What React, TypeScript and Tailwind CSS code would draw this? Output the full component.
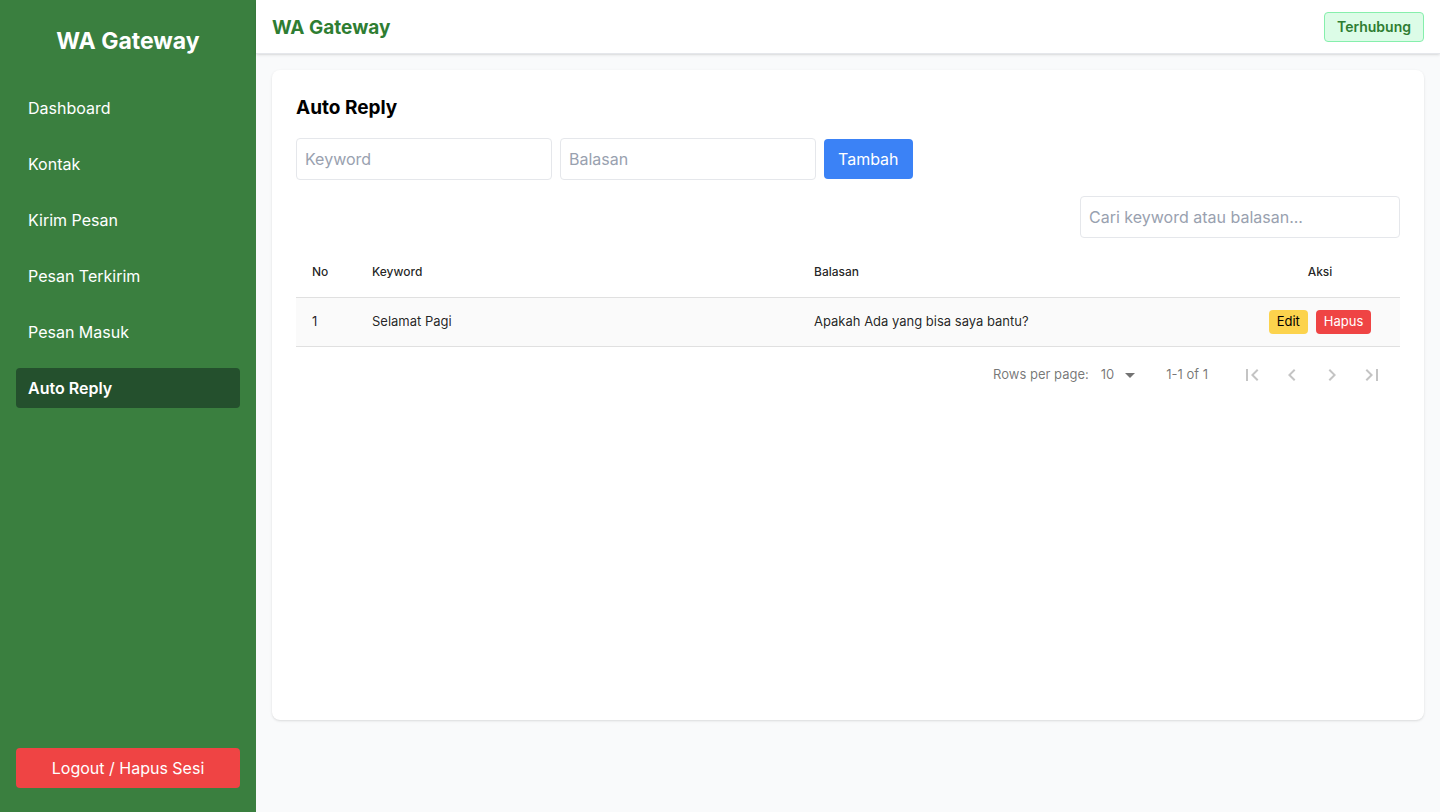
import { useState } from "react";

type Rule = { keyword: string; balasan: string };

const menu = ["Dashboard", "Kontak", "Kirim Pesan", "Pesan Terkirim", "Pesan Masuk", "Auto Reply"];

function PageIcon({ d }: { d: string }) {
  return (
    <button className="w-10 h-10 flex items-center justify-center text-[#c4c4c4]" disabled>
      <svg width="24" height="24" viewBox="0 0 24 24" fill="currentColor">
        <path d={d} />
      </svg>
    </button>
  );
}

export default function App() {
  const [keyword, setKeyword] = useState<string>("");
  const [balasan, setBalasan] = useState<string>("");
  const [search, setSearch] = useState<string>("");
  const [rules] = useState<Rule[]>([{ keyword: "Selamat Pagi", balasan: "Apakah Ada yang bisa saya bantu?" }]);

  const filtered = rules.filter(
    (r) =>
      r.keyword.toLowerCase().includes(search.toLowerCase()) ||
      r.balasan.toLowerCase().includes(search.toLowerCase())
  );

  return (
    <div className="flex h-[812px] font-['Inter',sans-serif] bg-gray-50">
      {/* Sidebar */}
      <aside className="w-64 shrink-0 bg-[#3a7f3f] text-white flex flex-col px-4">
        <h1 className="text-[23px] font-bold text-center mt-[25px] mb-[31px] leading-8">WA Gateway</h1>
        <nav className="flex flex-col gap-4">
          {menu.map((m) => (
            <a
              key={m}
              href="#"
              className={
                m === "Auto Reply"
                  ? "h-10 px-3 flex items-center rounded bg-[#24502d] font-semibold text-base"
                  : "h-10 px-3 flex items-center rounded text-base"
              }
            >
              {m}
            </a>
          ))}
        </nav>
        <div className="mt-auto mb-6">
          <button className="w-full h-10 bg-[#ef4444] rounded text-base">Logout / Hapus Sesi</button>
        </div>
      </aside>

      {/* Main */}
      <div className="flex-1 flex flex-col">
        <header className="h-[54px] bg-white border-b border-gray-200 shadow-sm flex items-center justify-between px-4">
          <span className="text-[19px] font-bold text-[#2e7d32] leading-7 mt-[3px]">WA Gateway</span>
          <span className="px-[12px] py-[4px] text-sm font-semibold text-[#2e7d32] bg-[#dcfce7] border border-[#86efac] rounded">
            Terhubung
          </span>
        </header>

        <main className="p-4">
          <div className="bg-white rounded-lg shadow h-[650px] p-6">
            <h2 className="text-[19px] font-bold text-black mb-[16px] leading-7">Auto Reply</h2>

            <div className="flex gap-2 items-center">
              <input
                value={keyword}
                onChange={(e) => setKeyword(e.target.value)}
                placeholder="Keyword"
                className="w-64 h-[42px] px-2 border border-gray-200 rounded text-base placeholder:text-gray-400 outline-none"
              />
              <input
                value={balasan}
                onChange={(e) => setBalasan(e.target.value)}
                placeholder="Balasan"
                className="w-64 h-[42px] px-2 border border-gray-200 rounded text-base placeholder:text-gray-400 outline-none"
              />
              <button className="h-10 px-[14px] bg-[#3b82f6] text-white rounded text-base">Tambah</button>
            </div>

            <div className="flex justify-end mt-4">
              <input
                value={search}
                onChange={(e) => setSearch(e.target.value)}
                placeholder="Cari keyword atau balasan..."
                className="w-80 h-[42px] px-2 border border-gray-200 rounded text-base placeholder:text-gray-400 outline-none"
              />
            </div>

            {/* Table */}
            <div className="mt-2 text-[13px] text-black/87">
              <div className="grid grid-cols-[60px_442px_442px_160px] h-[52px] items-center border-b border-[#e0e0e0] text-[12px] font-medium">
                <div className="px-4">No</div>
                <div className="px-4">Keyword</div>
                <div className="px-4">Balasan</div>
                <div className="px-4 text-center">Aksi</div>
              </div>
              {filtered.map((r, i) => (
                <div
                  key={i}
                  className="grid grid-cols-[60px_442px_442px_160px] h-[49px] items-center border-b border-[#e0e0e0] bg-[#fafafa]"
                >
                  <div className="px-4">{i + 1}</div>
                  <div className="px-4">{r.keyword}</div>
                  <div className="px-4">{r.balasan}</div>
                  <div className="px-4 flex justify-center gap-2">
                    <button className="h-6 px-2 bg-[#fcd34d] text-black rounded text-[13px]">Edit</button>
                    <button className="h-6 px-2 bg-[#ef4444] text-white rounded text-[13px]">Hapus</button>
                  </div>
                </div>
              ))}

              {/* Pagination */}
              <div className="h-14 flex items-center justify-end pr-2 text-[13px] text-black/55">
                <span>Rows per page:</span>
                <span className="ml-3 mr-1">10</span>
                <svg width="24" height="24" viewBox="0 0 24 24" fill="currentColor" className="text-black/55">
                  <path d="M7 10l5 5 5-5z" />
                </svg>
                <span className="ml-6 mr-6">1-1 of 1</span>
                <PageIcon d="M18.41 16.59L13.82 12l4.59-4.59L17 6l-6 6 6 6zM6 6h2v12H6z" />
                <PageIcon d="M15.41 7.41L14 6l-6 6 6 6 1.41-1.41L10.83 12z" />
                <PageIcon d="M10 6L8.59 7.41 13.17 12l-4.58 4.59L10 18l6-6z" />
                <PageIcon d="M5.59 7.41L10.18 12l-4.59 4.59L7 18l6-6-6-6zM16 6h2v12h-2z" />
              </div>
            </div>
          </div>
        </main>
      </div>
    </div>
  );
}
